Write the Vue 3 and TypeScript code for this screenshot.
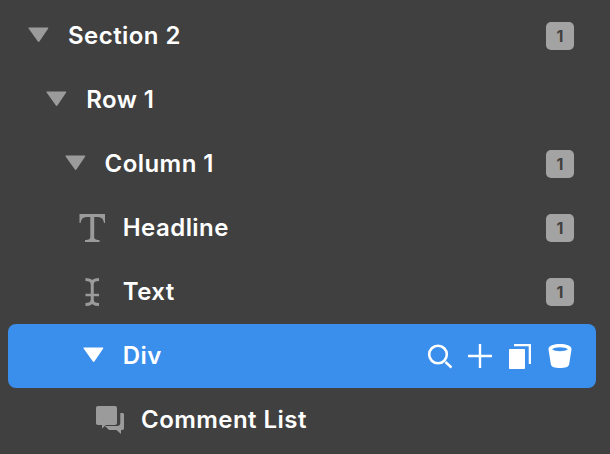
<script setup lang="ts">
type Row = { label: string; depth: number; icon: 'caret' | 'headline' | 'text' | 'comment'; badge?: number; active?: boolean };

const rows: Row[] = [
  { label: 'Section 2', depth: 0, icon: 'caret', badge: 1 },
  { label: 'Row 1', depth: 1, icon: 'caret' },
  { label: 'Column 1', depth: 2, icon: 'caret', badge: 1 },
  { label: 'Headline', depth: 3, icon: 'headline', badge: 1 },
  { label: 'Text', depth: 3, icon: 'text', badge: 1 },
  { label: 'Div', depth: 3, icon: 'caret', active: true },
  { label: 'Comment List', depth: 4, icon: 'comment' },
];
</script>

<template>
  <div class="tree">
    <div v-for="row in rows" :key="row.label" class="row" :class="{ 'row--active': row.active }">
      <div class="row__lead" :style="{ paddingLeft: `${row.depth * 18.25}px` }">
        <svg class="row__icon" width="40" height="40" viewBox="0 0 40 40">
          <path v-if="row.icon === 'caret'" d="M11 11.500h18.500c.7 0 1 .6.7 1.100l-8.800 13c-.4.5-1.100.5-1.500 0l-9.300-13c-.3-.5 0-1.100.4-1.100z" fill="currentColor" />
          <path
            v-else-if="row.icon === 'headline'"
            d="M6.500 6H32v9h-1c-.5-4-2.500-6-6-6h-3.800v20c0 2 1.300 3 5.300 3v2H12v-2c4 0 5.300-1 5.300-3V9h-3.800c-3.500 0-5.500 2-6 6h-1z"
            fill="currentColor"
          />
          <g v-else-if="row.icon === 'text'" fill="none" stroke="currentColor">
            <path d="M12.500 7.500c3.500 0 6.700 1 6.700 4.500 0-3.500 3.300-4.500 6.800-4.500" stroke-width="3" />
            <path d="M19.250 10v20" stroke-width="3" />
            <path d="M12.500 23h13.500" stroke-width="2.500" />
            <path d="M12.500 32.500c3.500 0 6.700-1 6.700-4.500 0 3.500 3.300 4.500 6.800 4.500" stroke-width="3" />
          </g>
          <g v-else fill="currentColor">
            <path d="M7 6h17c1.200 0 2 .8 2 2v15c0 1.200-.8 2-2 2H15l-4 3.500V25H7c-1.200 0-2-.8-2-2V8c0-1.200.8-2 2-2z" />
            <path d="M29.300 13h2c1 0 1.700.7 1.700 1.500V28c0 1-.7 2-1.700 2H30v4l-4.500-4H18l-4-4h12c2 0 3.300-1 3.300-3z" />
          </g>
        </svg>
        <span class="row__label">{{ row.label }}</span>
      </div>
      <span v-if="row.badge" class="badge">{{ row.badge }}</span>
      <div v-if="row.active" class="actions">
        <svg width="26" height="26" viewBox="0 0 26 26" fill="none" stroke="#fff">
          <circle cx="12" cy="11.500" r="8.800" stroke-width="2.600" />
          <path d="M19.500 19l6 5.500" stroke-width="2.500" />
        </svg>
        <svg width="26" height="26" viewBox="0 0 26 26" stroke="#fff" stroke-width="2.400">
          <path d="M13 1v24M1 13h24" />
        </svg>
        <svg width="24" height="26" viewBox="0 0 24 26" fill="#fff">
          <path d="M2 6h14c.6 0 1 .4 1 1v18c0 .6-.4 1-1 1H2c-.6 0-1-.4-1-1V7c0-.6.4-1 1-1z" />
          <path d="M6 1h17v20h-2.300V3.200H6z" />
        </svg>
        <svg width="26" height="26" viewBox="0 0 26 26">
          <path d="M1.500 6C1.500 2.500 7 1 13 1s11.500 1.500 11.500 5c0 1-.2 2-.4 3l-2 12.500C21.700 24 18 25 13 25s-8.700-1-9.100-3.500l-2-12.500C1.700 8 1.500 7 1.500 6z" fill="#fff" />
          <path d="M5 6.300C6.500 5 9.500 4.300 13 4.300s6.500.7 8 2C19.500 7.500 16.500 8.200 13 8.200S6.500 7.500 5 6.300z" fill="#3a8eec" />
        </svg>
      </div>
    </div>
  </div>
</template>

<style>
html,
body {
  background: #404040;
}
</style>

<style scoped>
.tree {
  height: 454px;
  overflow: hidden;
  box-sizing: border-box;
  padding: 4px 14px 0 8px;
  background: #404040;
  font-family: Inter, "Liberation Sans", sans-serif;
}

.row {
  display: flex;
  align-items: center;
  height: 64px;
  padding: 0 22px 0 10px;
  border-radius: 8px;
  color: #fff;
}

.row--active {
  padding-right: 23px;
  background: #3a8eec;
}

.row__lead {
  display: flex;
  align-items: center;
  flex: 1;
  min-width: 0;
}

.row__icon {
  flex: none;
  margin-right: 10px;
  color: #9b9b9b;
}

.row--active .row__icon {
  color: #fff;
}

.row__label {
  margin-bottom: 1px;
  font-size: 24px;
  font-weight: 600;
  letter-spacing: 0.45px;
}

.badge {
  display: flex;
  align-items: center;
  justify-content: center;
  width: 28px;
  height: 28px;
  border-radius: 5px;
  background: #a3a3a3;
  color: #404040;
  font-size: 16px;
  font-weight: 700;
}

.actions {
  display: flex;
  align-items: center;
  gap: 15px;
}
</style>
